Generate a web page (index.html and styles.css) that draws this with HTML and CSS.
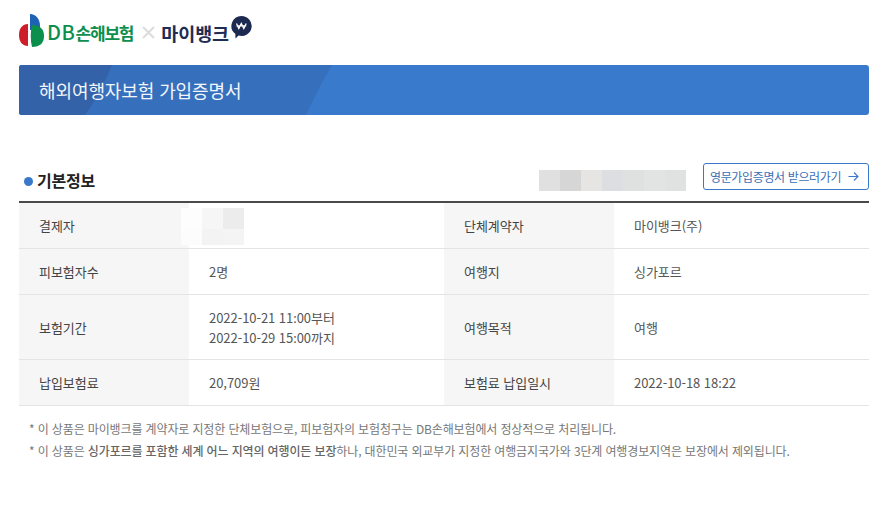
FILE: index.html
```html
<!DOCTYPE html>
<html lang="ko">
<head>
<meta charset="utf-8">
<title>해외여행자보험 가입증명서</title>
<link rel="stylesheet" href="styles.css">
</head>
<body>
<div class="page">
  <header class="logos">
    <svg class="db-mark" width="26" height="33" viewBox="0 0 26 33" aria-hidden="true">
      <path d="M9 10 C3.5 10 0 14 0 21 C0 28 3.5 32 9 32 Z" fill="#cc1f2a"/>
      <path d="M11 0 C17 0 21 5 21 12 L21 16 L11 16 Z" fill="#1d62b4"/>
      <path d="M13 11 C21 11 25 15 25 22 C25 29 21 33 13 33 Q10.5 22 13 11 Z" fill="#0c8f4d"/>
    </svg>
    <span class="db-name"><span class="db-latin">DB</span>손해보험</span>
    <svg class="times" width="13" height="13" viewBox="0 0 13 13" aria-hidden="true">
      <path d="M1 1 L12 12 M12 1 L1 12" stroke="#dcdcdc" stroke-width="2" fill="none"/>
    </svg>
    <span class="my-name">마이뱅크</span>
    <svg class="my-mark" width="21" height="23" viewBox="0 0 21 23" aria-hidden="true">
      <path d="M10.5 0 A10.3 10 0 1 1 7.5 19.6 L4.5 22.5 L4.3 17.8 A10.3 10 0 0 1 10.5 0 Z" fill="#1c2a52"/>
      <path d="M5.5 7.5 L7.8 12.5 L10.3 7.5 L12.8 12.5 L15.2 7.5 M5.5 9.8 H15.2" stroke="#fff" stroke-width="1.3" fill="none"/>
    </svg>
  </header>

  <div class="banner">
    <svg class="banner-art" width="850" height="50" viewBox="0 0 850 50" aria-hidden="true">
      <path d="M0 0 H313 Q300 22 287 50 H0 Z" fill="#3670bc"/>
      <path d="M0 0 H93 Q82 28 66 50 H0 Z" fill="#3462a8"/>
    </svg>
    <h1 class="banner-title">해외여행자보험 가입증명서</h1>
  </div>

  <section class="section">
    <div class="section-head">
      <h2 class="section-title"><span class="dot"></span>기본정보</h2>
      <div class="head-right">
        <div class="mosaic mosaic-wide">
          <i class="t1"></i><i class="t2"></i><i class="t3"></i><i class="t4"></i><i class="t5"></i><i class="t6"></i><i class="t7"></i>
        </div>
        <a class="eng-btn" href="#">영문가입증명서 받으러가기
          <svg width="11" height="11" viewBox="0 0 11 11" aria-hidden="true"><path d="M0.5 5.5 H10 M6 1.5 L10 5.5 L6 9.5" stroke="#3a78c9" stroke-width="1.1" fill="none"/></svg>
        </a>
      </div>
    </div>

    <div class="info-grid">
      <div class="cell label">결제자</div>
      <div class="cell value blurred">
        <div class="mosaic mosaic-name">
          <i class="n1"></i><i class="n2"></i><i class="n3"></i><i class="n4"></i><i class="n5"></i><i class="n6"></i>
        </div>
      </div>
      <div class="cell label">단체계약자</div>
      <div class="cell value">마이뱅크(주)</div>

      <div class="cell label">피보험자수</div>
      <div class="cell value">2명</div>
      <div class="cell label">여행지</div>
      <div class="cell value">싱가포르</div>

      <div class="cell label tall">보험기간</div>
      <div class="cell value tall"><span>2022-10-21 11<span class="colon">:</span>00부터<br>2022-10-29 15<span class="colon">:</span>00까지</span></div>
      <div class="cell label tall">여행목적</div>
      <div class="cell value tall">여행</div>

      <div class="cell label">납입보험료</div>
      <div class="cell value">20,709원</div>
      <div class="cell label">보험료 납입일시</div>
      <div class="cell value"><span>2022-10-18 18<span class="colon">:</span>22</span></div>
    </div>

    <ul class="notes">
      <li>* 이 상품은 마이뱅크를 계약자로 지정한 단체보험으로, 피보험자의 보험청구는 DB손해보험에서 정상적으로 처리됩니다.</li>
      <li>* 이 상품은 <b>싱가포르를 포함한 세계 어느 지역의 여행이든 보장</b>하나, 대한민국 외교부가 지정한 여행금지국가와 3단계 여행경보지역은 보장에서 제외됩니다.</li>
    </ul>
  </section>
</div>
</body>
</html>
```

FILE: styles.css
```css
* { box-sizing: border-box; }
html, body { margin: 0; padding: 0; background: #fff; }
body {
  font-family: "Noto Sans CJK KR", "Noto Sans", sans-serif;
  color: #555;
  overflow: hidden;
}
.page { width: 896px; height: 507px; padding: 14px 27px 0 19px; }

.logos { display: flex; align-items: center; height: 33px; }
.db-mark { flex: none; }
.db-name {
  margin-left: 2px;
  margin-top: 4px;
  font-size: 17px;
  font-weight: 700;
  letter-spacing: -1.2px;
  color: #0c8f4d;
  line-height: 20px;
}
.db-latin { font-size: 20px; font-weight: 500; letter-spacing: 0.6px; line-height: 20px; }
.times { margin: 3px 0 0 9px; }
.my-name {
  margin-left: 6px;
  margin-top: 5px;
  font-size: 18.5px;
  font-weight: 700;
  letter-spacing: -0.1px;
  color: #1f2d55;
  line-height: 20px;
}
.my-mark { margin: -6px 0 0 2px; }

.banner {
  position: relative;
  margin-top: 18px;
  height: 50px;
  border-radius: 3px;
  display: flex;
  align-items: center;
  padding-left: 20px;
  overflow: hidden;
  background: #3a7acc;
}
.banner-art { position: absolute; left: 0; top: 0; }
.banner-title {
  position: relative;
  margin: 0;
  font-size: 18px;
  font-weight: 400;
  color: #f2f6fb;
  letter-spacing: -0.1px;
}

.section { margin-top: 48px; }
.section-head {
  display: flex;
  justify-content: space-between;
  align-items: flex-start;
  height: 38px;
}
.section-title {
  margin: 6px 0 0 5px;
  display: flex;
  align-items: center;
  font-size: 16px;
  font-weight: 700;
  letter-spacing: -0.2px;
  color: #222;
  line-height: 22px;
}
.dot {
  width: 9px;
  height: 9px;
  border-radius: 50%;
  background: #3a78c9;
  margin-top: 2px;
  margin-right: 4px;
}
.head-right { display: flex; align-items: flex-start; gap: 17px; }
.mosaic { display: grid; }
.mosaic i { display: block; }
.mosaic-wide { grid-template-columns: repeat(7, 21px); height: 21px; margin-top: 7px; }
.t1 { background: #e0e0e0; }
.t2 { background: #d6d6d6; }
.t3 { background: #e6e5e3; }
.t4 { background: #dcdee1; }
.t5 { background: #dfe0e0; }
.t6 { background: #e2e3e3; }
.t7 { background: #e0e2e2; }

.eng-btn {
  display: flex;
  align-items: center;
  justify-content: space-between;
  width: 166px;
  height: 27px;
  padding: 0 9px 0 6px;
  border: 1px solid #3a78c9;
  border-radius: 3px;
  font-size: 12px;
  letter-spacing: -0.36px;
  color: #3a6fb5;
  text-decoration: none;
  white-space: nowrap;
}

.info-grid {
  display: grid;
  grid-template-columns: 170px 255px 170px 255px;
  grid-template-rows: 46px 46px 65px 46px;
  border-top: 2px solid #4a4a4a;
}
.cell {
  display: flex;
  align-items: center;
  border-bottom: 1px solid #e4e4e4;
  font-size: 13px;
  line-height: 20px;
  letter-spacing: -0.05px;
  color: #555;
}
.tall { padding-top: 2px; }
.colon { font-family: "Noto Sans", sans-serif; }
.label { background: #f6f6f6; padding-left: 20px; color: #444; }
.value { padding-left: 20px; }
.blurred { position: relative; }
.mosaic-name {
  position: absolute;
  left: -8px;
  top: 5px;
  grid-template-columns: repeat(3, 21px);
  grid-template-rows: 21px 16px;
}
.n1 { background: #fdfdfd; }
.n2 { background: #f6f6f6; }
.n3 { background: #ececec; }
.n4 { background: #fcfcfc; }
.n5 { background: #f3f3f3; }
.n6 { background: #f4f4f4; }

.notes {
  list-style: none;
  margin: 12px 0 0;
  padding: 0 0 0 10px;
  font-size: 12px;
  line-height: 22px;
  letter-spacing: -0.13px;
  color: #777;
}
.notes b { font-weight: 500; color: #666; }
```
